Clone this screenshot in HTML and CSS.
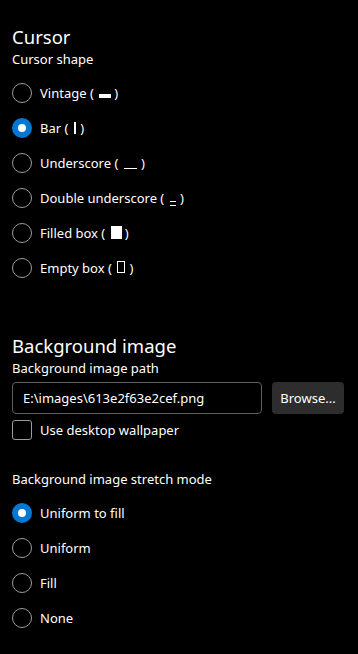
FILE: index.html
```html
<!DOCTYPE html>
<html lang="en">
<head>
  <meta charset="UTF-8">
  <meta name="viewport" content="width=device-width, initial-scale=1.0">
  <title>Appearance</title>
  <link rel="stylesheet" href="styles.css">
</head>
<body>
  <main class="settings">
    <section class="group">
      <h2 class="group-title">Cursor</h2>
      <div class="field-label">Cursor shape</div>
      <div class="radio-list">
        <label class="radio"><input type="radio" name="cursor"><span class="mark"></span><span>Vintage ( <span class="glyph vintage"></span>)</span></label>
        <label class="radio"><input type="radio" name="cursor" checked><span class="mark"></span><span>Bar ( <span class="glyph bar"></span> )</span></label>
        <label class="radio"><input type="radio" name="cursor"><span class="mark"></span><span>Underscore ( <span class="glyph underscore"></span> )</span></label>
        <label class="radio"><input type="radio" name="cursor"><span class="mark"></span><span>Double underscore ( <span class="glyph double"></span> )</span></label>
        <label class="radio"><input type="radio" name="cursor"><span class="mark"></span><span>Filled box ( <span class="glyph filled"></span>)</span></label>
        <label class="radio"><input type="radio" name="cursor"><span class="mark"></span><span>Empty box ( <span class="glyph empty"></span> )</span></label>
      </div>
    </section>

    <section class="group group-bg">
      <h2 class="group-title">Background image</h2>
      <div class="field-label">Background image path</div>
      <div class="path-row">
        <input class="text-box" type="text" value="E:\images\613e2f63e2cef.png">
        <button class="btn" type="button">Browse...</button>
      </div>
      <label class="check"><input type="checkbox"><span class="box"></span><span>Use desktop wallpaper</span></label>

      <div class="field-label stretch-label">Background image stretch mode</div>
      <div class="radio-list">
        <label class="radio"><input type="radio" name="stretch" checked><span class="mark"></span><span>Uniform to fill</span></label>
        <label class="radio"><input type="radio" name="stretch"><span class="mark"></span><span>Uniform</span></label>
        <label class="radio"><input type="radio" name="stretch"><span class="mark"></span><span>Fill</span></label>
        <label class="radio"><input type="radio" name="stretch"><span class="mark"></span><span>None</span></label>
      </div>
    </section>
  </main>
</body>
</html>
```

FILE: styles.css
```css
body {
  margin: 0;
  padding: 0;
  background: #000;
  color: #fff;
  font-family: "Noto Sans", "Open Sans", sans-serif;
  font-size: 13px;
}
.settings {
  padding: 25px 12px 20px;
}
.group-title {
  margin: 0;
  font-size: 18.5px;
  font-weight: 400;
  line-height: 24px;
}
.group-bg {
  margin-top: 49px;
}
.field-label {
  line-height: 20px;
}
.radio-list {
  display: flex;
  flex-direction: column;
  margin-top: 6px;
}
.radio {
  display: flex;
  align-items: center;
  height: 35px;
  cursor: pointer;
}
.radio input,
.check input {
  display: none;
}
.mark {
  box-sizing: border-box;
  width: 20px;
  height: 20px;
  margin-right: 8px;
  border: 1px solid #9c9c9c;
  border-radius: 50%;
  flex: none;
}
.radio input:checked + .mark {
  border: 6px solid #0078d4;
  background: #fff;
}
.glyph {
  display: inline-block;
  vertical-align: baseline;
  margin: 0 1px 0 2px;
}
.glyph.vintage {
  width: 12px;
  height: 4px;
  background: #fff;
  margin-right: 3px;
}
.glyph.bar {
  width: 2px;
  height: 12px;
  background: #fff;
  margin-bottom: -1px;
}
.glyph.underscore {
  width: 13px;
  height: 1px;
  background: #fff;
  margin-bottom: -1px;
}
.glyph.double {
  width: 6px;
  height: 3px;
  border-top: 1px solid #fff;
  border-bottom: 1px solid #fff;
  margin-bottom: -3px;
}
.glyph.filled {
  width: 11px;
  height: 13px;
  background: #fff;
  margin-right: 3px;
  margin-bottom: -1px;
}
.glyph.empty {
  box-sizing: border-box;
  width: 8px;
  height: 12px;
  border: 1px solid #fff;
}
.path-row {
  display: flex;
  gap: 10px;
  margin-top: 4px;
}
.text-box {
  box-sizing: border-box;
  width: 250px;
  height: 32px;
  padding: 0 10px;
  background: #000;
  color: #fff;
  border: 1px solid #5f5f5f;
  border-radius: 4px;
  font: inherit;
}
.btn {
  height: 32px;
  width: 72px;
  padding: 0;
  background: #2d2d2d;
  color: #fff;
  border: none;
  border-radius: 4px;
  font: inherit;
}
.check {
  display: flex;
  align-items: center;
  margin-top: 6px;
  height: 20px;
}
.box {
  box-sizing: border-box;
  width: 20px;
  height: 20px;
  margin-right: 8px;
  border: 1px solid #9c9c9c;
  border-radius: 3px;
}
.stretch-label {
  margin-top: 29px;
}
```
